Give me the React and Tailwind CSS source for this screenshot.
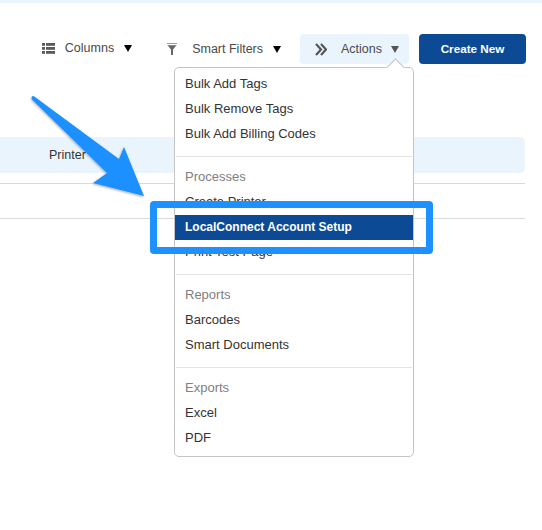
import React from 'react';

const Caret = ({ className = 'border-t-black' }) => (
    <span className={`w-0 h-0 border-x-[4.5px] border-x-transparent border-t-[7px] ${className}`} />
);

const ListIcon = () => (
    <svg width="13" height="11" viewBox="0 0 13 11" fill="#5a5a5a">
        <rect x="0" y="0" width="3" height="2.8" />
        <rect x="4" y="0" width="9" height="2.8" />
        <rect x="0" y="4" width="3" height="2.8" />
        <rect x="4" y="4" width="9" height="2.8" />
        <rect x="0" y="8" width="3" height="2.8" />
        <rect x="4" y="8" width="9" height="2.8" />
    </svg>
);

const FunnelIcon = () => (
    <svg width="10" height="12" viewBox="0 0 10 12" fill="#666">
        <rect x="0" y="0" width="10" height="1" fill="#999" />
        <path d="M0.5 2.2h9L6 6.5V12H4V6.5z" />
    </svg>
);

const ChevronsIcon = () => (
    <svg width="12" height="13" viewBox="0 0 12 13" fill="none" stroke="#555" strokeWidth="2.2">
        <path d="M1 1l5 5.5-5 5.5" />
        <path d="M6 1l5 5.5-5 5.5" />
    </svg>
);

const MenuItem = ({ children }) => (
    <div className="h-[25px] flex items-center px-[10px] pb-[2px] text-[#333333]">{children}</div>
);

const MenuHead = ({ children }) => (
    <div className="h-[25px] flex items-center px-[10px] pb-[2px] text-[#808080]">{children}</div>
);

const Divider = () => <div className="h-px bg-[#e3e3e3] mx-px my-[8.5px]" />;

const ActionsMenu = () => (
    <div className="absolute left-[174px] top-[67px] w-[240px] h-[390px] bg-white border border-[#c4c4c4] rounded-[5px] py-[4px] text-[13px]">
        {/* little pointer under the Actions button */}
        <div className="absolute right-[11.5px] -top-[7px] w-[13px] h-[13px] rotate-45 bg-white border-l border-t border-[#c4c4c4]" />
        <div className="relative">
            <MenuItem>Bulk Add Tags</MenuItem>
            <MenuItem>Bulk Remove Tags</MenuItem>
            <MenuItem>Bulk Add Billing Codes</MenuItem>
            <Divider />
            <MenuHead>Processes</MenuHead>
            <MenuItem>Create Printer</MenuItem>
            <div className="h-[25px] flex items-center px-[10px] pb-[2px] bg-[#0d4a96] text-white text-[12px] font-bold">LocalConnect Account Setup</div>
            <MenuItem>Print Test Page</MenuItem>
            <Divider />
            <MenuHead>Reports</MenuHead>
            <MenuItem>Barcodes</MenuItem>
            <MenuItem>Smart Documents</MenuItem>
            <Divider />
            <MenuHead>Exports</MenuHead>
            <MenuItem>Excel</MenuItem>
            <MenuItem>PDF</MenuItem>
        </div>
    </div>
);

const Arrow = () => (
    <svg className="absolute left-0 top-0 pointer-events-none" width="200" height="220" viewBox="0 0 200 220">
        <defs>
            <filter id="arrowShadow" x="-10%" y="-10%" width="120%" height="120%">
                <feDropShadow dx="-0.5" dy="1" stdDeviation="0.8" floodColor="#000" floodOpacity="0.35" />
            </filter>
        </defs>
        <path
            d="M32 96.5 Q33 95.5 35 97 L119 159 L124 147 L144 196 L93 183 L107 173 L32 99.5 Q31 98 32 96.5 Z"
            fill="#1e90ff"
            filter="url(#arrowShadow)"
        />
    </svg>
);

export default function App() {
    return (
        <div className="relative w-[542px] h-[530px] bg-white overflow-hidden text-[12.5px] text-[#333333] font-['Liberation_Sans',Arial,sans-serif]">
            <div className="h-[3px] bg-[#eaf4fd]" />

            <div className="flex items-center justify-end mt-[31px] pr-[16px] h-[30px]">
                <div className="flex items-center text-[#4a4a4a] -mt-[2px]">
                    <ListIcon />
                    <span className="ml-[10px]">Columns</span>
                    <span className="ml-[10px] flex"><Caret /></span>
                </div>
                <div className="flex items-center text-[#4a4a4a] ml-[35px]">
                    <FunnelIcon />
                    <span className="ml-[15px]">Smart Filters</span>
                    <span className="ml-[10px] flex"><Caret /></span>
                </div>
                <div className="flex items-center text-[#4a4a4a] h-[30px] w-[109px] ml-[19px] pl-[15px] bg-[#eaf4fd] rounded-[4px]">
                    <ChevronsIcon />
                    <span className="ml-[14px]">Actions</span>
                    <span className="ml-[9px] flex"><Caret className="border-t-[#555555]" /></span>
                </div>
                <div className="flex items-center justify-center h-[30px] w-[107px] ml-[10px] bg-[#0d4a96] text-white text-[11.7px] font-bold rounded-[4px]">Create New</div>
            </div>

            <div className="mt-[73px] h-[36px] w-[525px] flex items-center pl-[49px] bg-[#eaf4fd] rounded-r-[5px]">Printer</div>
            <div className="mt-[10px] h-[36px] w-[525px] border-y border-[#d9d9d9]" />

            <ActionsMenu />
            <Arrow />
            {/* call-out box drawn over the menu */}
            <div className="absolute left-[150px] top-[201px] w-[283px] h-[53px] border-[7px] border-[#1e90ff] rounded-[4px]" />
        </div>
    );
}
